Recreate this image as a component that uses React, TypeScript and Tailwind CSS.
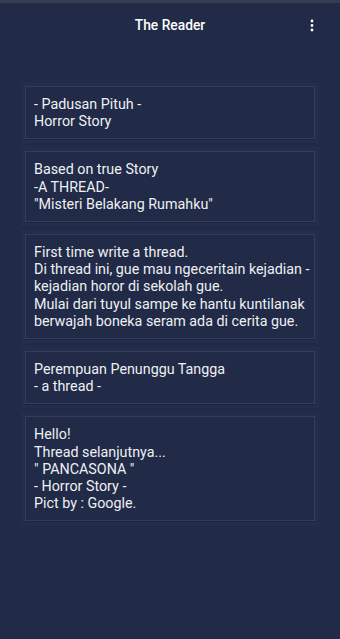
const stories = [
  ["- Padusan Pituh -", "Horror Story"],
  ["Based on true Story", "-A THREAD-", "\"Misteri Belakang Rumahku\""],
  [
    "First time write a thread.",
    "Di thread ini, gue mau ngeceritain kejadian -",
    "kejadian horor di sekolah gue.",
    "Mulai dari tuyul sampe ke hantu kuntilanak",
    "berwajah boneka seram ada di cerita gue.",
  ],
  ["Perempuan Penunggu Tangga", "- a thread -"],
  ["Hello!", "Thread selanjutnya...", "\" PANCASONA \"", "- Horror Story -", "Pict by : Google."],
];

export default function App() {
  return (
    <div
      className="min-h-[639px] w-full bg-[#212a46] text-white"
      style={{ fontFamily: "Roboto, 'Liberation Sans', sans-serif" }}
    >
      <div className="h-[3px] bg-[#373c52]" />

      {/* Toolbar */}
      <div className="relative flex h-[44px] items-center justify-center">
        <span className="text-[13.8px] font-medium">The Reader</span>
        <button className="absolute right-[26px] top-[16px] text-white">
          <svg width="4" height="13" viewBox="0 0 4 13" fill="currentColor">
            <circle cx="2" cy="2" r="1.4" />
            <circle cx="2" cy="6.5" r="1.4" />
            <circle cx="2" cy="11" r="1.4" />
          </svg>
        </button>
      </div>

      {/* List */}
      <div className="mt-[39px] flex flex-col gap-[12px] px-[25px]">
        {stories.map((lines, i) => (
          <div
            key={i}
            className="border border-[#333d5c] px-[8px] pb-[8px] pt-[9px] shadow-[0_1px_0_#1c2440,0_0_0_4px_#242d4a]"
          >
            {lines.map((l, j) => (
              <p key={j} className="whitespace-nowrap text-[14.3px] leading-[17.2px] text-[#eef0f4]">
                {l}
              </p>
            ))}
          </div>
        ))}
      </div>
    </div>
  );
}
